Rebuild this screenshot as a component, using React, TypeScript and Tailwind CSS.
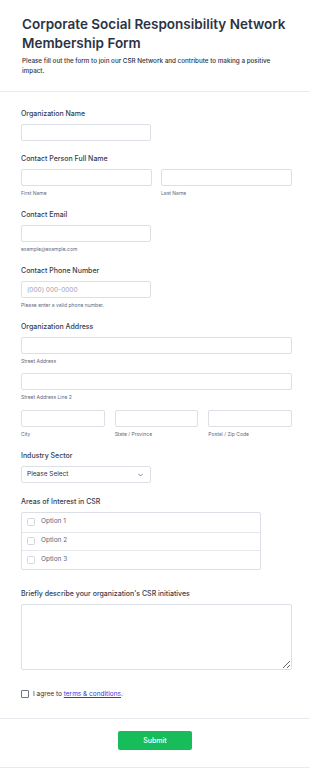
const label = "block text-[7px] leading-[10px] font-medium text-[#343c50]";
const input = "block h-[17px] rounded-[2px] border border-[#dcdfe6] bg-white px-[5px] text-[6.5px] text-[#2c3345] outline-none";
const sub = "block text-[5px] leading-[8px] text-[#5f6a82] mt-[3px]";

const Sub = ({ children }: { children: React.ReactNode }) => <span className={sub}>{children}</span>;

export default function App() {
  return (
    <div className="min-h-[768px] bg-white font-['Inter',sans-serif] antialiased">
      <header className="border-b border-[#eaebf0] px-[22px] pt-[15px] pb-[15px]">
        <h1 className="text-[13.5px] leading-[19px] font-semibold text-[#2c3345]">
          Corporate Social Responsibility Network Membership Form
        </h1>
        <p className="mt-[3px] text-[6.3px] leading-[10px] font-medium text-[#2c3345]">
          Please fill out the form to join our CSR Network and contribute to making a positive impact.
        </p>
      </header>

      <form className="pl-[21px] pr-[18px] pt-[17px]">
        <div>
          <span className={label}>Organization Name</span>
          <input className={`${input} mt-[5px] w-[130px]`} />
        </div>

        <div className="mt-[13px]">
          <span className={label}>Contact Person Full Name</span>
          <div className="mt-[5px] grid grid-cols-2 gap-[9px]">
            <div>
              <input className={`${input} w-full`} />
              <Sub>First Name</Sub>
            </div>
            <div>
              <input className={`${input} w-full`} />
              <Sub>Last Name</Sub>
            </div>
          </div>
        </div>

        <div className="mt-[13px]">
          <span className={label}>Contact Email</span>
          <input className={`${input} mt-[5px] w-[130px]`} />
          <Sub>example@example.com</Sub>
        </div>

        <div className="mt-[13px]">
          <span className={label}>Contact Phone Number</span>
          <input
            className={`${input} mt-[5px] w-[130px] placeholder:text-[#9aa1b3]`}
            placeholder="(000) 000-0000"
          />
          <Sub>Please enter a valid phone number.</Sub>
        </div>

        <div className="mt-[13px]">
          <span className={label}>Organization Address</span>
          <input className={`${input} mt-[5px] w-full`} />
          <Sub>Street Address</Sub>
          <input className={`${input} mt-[8px] w-full`} />
          <Sub>Street Address Line 2</Sub>
          <div className="mt-[9px] grid grid-cols-3 gap-[10px]">
            <div>
              <input className={`${input} w-full`} />
              <Sub>City</Sub>
            </div>
            <div>
              <input className={`${input} w-full`} />
              <Sub>State / Province</Sub>
            </div>
            <div>
              <input className={`${input} w-full`} />
              <Sub>Postal / Zip Code</Sub>
            </div>
          </div>
        </div>

        <div className="mt-[13px]">
          <span className={label}>Industry Sector</span>
          <div className={`${input} mt-[5px] w-[130px] flex items-center justify-between`}>
            <span>Please Select</span>
            <svg width="5" height="4" viewBox="0 0 10 6" className="mr-[2px]">
              <path d="M1 1l4 4 4-4" fill="none" stroke="#57647e" strokeWidth="1.5" strokeLinecap="round" />
            </svg>
          </div>
        </div>

        <div className="mt-[14px]">
          <span className={label}>Areas of Interest in CSR</span>
          <div className="mt-[5px] w-[240px] rounded-[2px] border border-[#dcdfe6]">
            {["Option 1", "Option 2", "Option 3"].map((o, i) => (
              <div
                key={o}
                className={`flex h-[18.5px] items-center gap-[6px] px-[5px] ${i > 0 ? "border-t border-[#e6e8ee]" : ""}`}
              >
                <span className="h-[8px] w-[8px] rounded-[1.5px] border border-[#d3d6df] bg-white" />
                <span className="text-[6.5px] text-[#57647e]">{o}</span>
              </div>
            ))}
          </div>
        </div>

        <div className="mt-[19px]">
          <span className={label}>Briefly describe your organization's CSR initiatives</span>
          <textarea className="mt-[5px] block h-[66px] w-full rounded-[2px] border border-[#dcdfe6] outline-none" />
        </div>

        <div className="mt-[20px] flex items-center gap-[4px] pb-[19px]">
          <span className="h-[8px] w-[8px] rounded-[1px] border border-[#6f768a]" />
          <span className="text-[6.5px] text-[#2c3345]">
            I agree to{" "}
            <a href="#" className="text-[#2e3bdb] underline">
              terms &amp; conditions
            </a>
            .
          </span>
        </div>
      </form>

      <div className="border-t border-b border-[#eaebf0] pt-[12px] pb-[17px] flex justify-center">
        <button className="h-[19px] w-[74px] rounded-[2px] bg-[#18bd5b] text-[7px] font-medium text-white">
          Submit
        </button>
      </div>
    </div>
  );
}
